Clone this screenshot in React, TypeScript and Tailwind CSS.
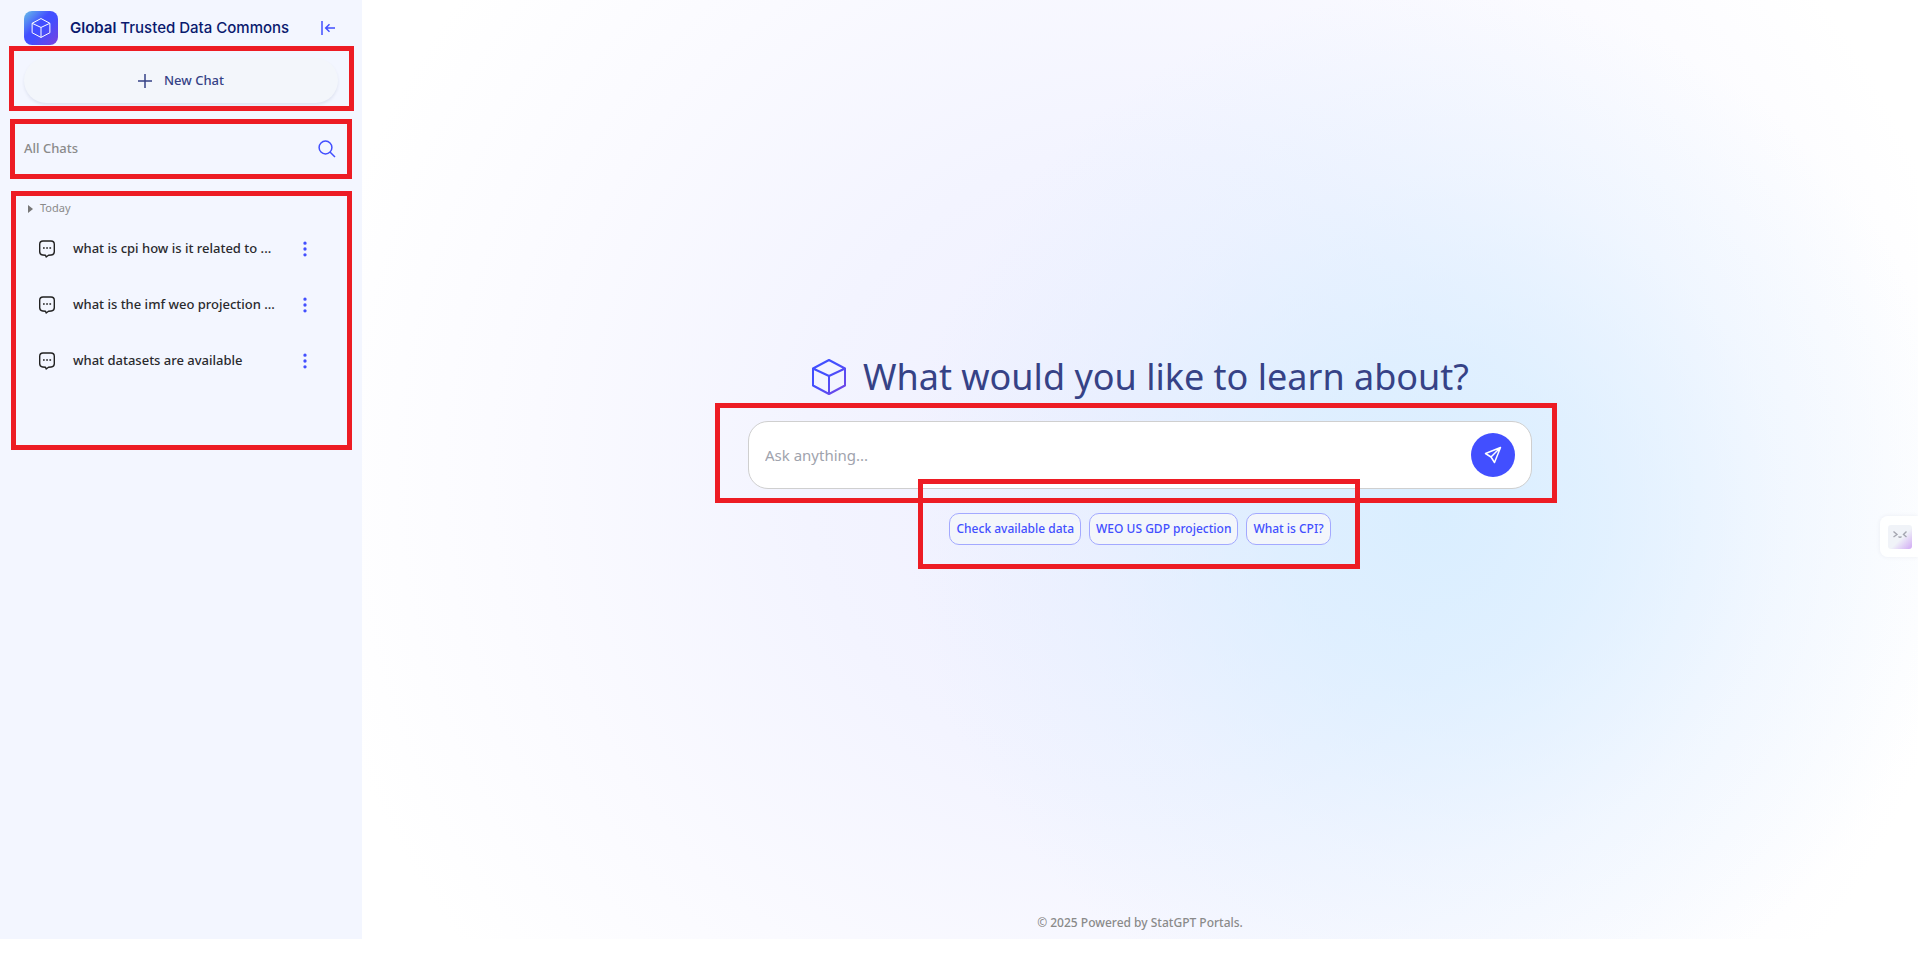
import React from "react";
import { MoreVertical } from "lucide-react";

const chats = [
  "what is cpi how is it related to ...",
  "what is the imf weo projection ...",
  "what datasets are available",
];

const suggestions = ["Check available data", "WEO US GDP projection", "What is CPI?"];

function Cube({ className, stroke, width }: { className: string; stroke: string; width: number }) {
  return (
    <svg viewBox="0 0 36 36" className={className} fill="none" stroke={stroke} strokeWidth={width} strokeLinejoin="round" aria-hidden="true">
      <defs>
        <linearGradient id="cube-stroke" x1="0" y1="0" x2="36" y2="36" gradientUnits="userSpaceOnUse">
          <stop offset="0.4" stopColor="#424fff" />
          <stop offset="1" stopColor="#7a45e0" />
        </linearGradient>
      </defs>
      <path d="M18 1 34 9.500V26.500L18 35 2 26.500V9.500ZM2 9.500 18 17 34 9.500M18 17V35" />
    </svg>
  );
}

function CollapseIcon() {
  return (
    <svg viewBox="0 0 16 16" className="size-4" fill="none" stroke="#424fff" strokeWidth="1.500" aria-hidden="true">
      <path d="M2 1v14M15 8H6M9.500 4.200 5.700 8l3.800 3.800" />
    </svg>
  );
}

function PlusIcon() {
  return (
    <svg viewBox="0 0 14 14" className="size-3.5" fill="none" stroke="#364286" strokeWidth="1.500" aria-hidden="true">
      <path d="M7 0v14M0 7h14" />
    </svg>
  );
}

function SearchIcon() {
  return (
    <svg viewBox="0 0 18 18" className="size-[18px]" fill="none" stroke="#424fff" strokeWidth="1.500" aria-hidden="true">
      <circle cx="7.500" cy="7.500" r="6.400" />
      <path d="m12 12 5 5" />
    </svg>
  );
}

function ChatIcon() {
  return (
    <svg viewBox="0 0 18 18" className="size-[18px] shrink-0" fill="none" stroke="#222" strokeWidth="1.400" strokeLinejoin="round" aria-hidden="true">
      <path d="M5 1h8q3.300 0 3.300 3.300v7.500q0 3-3 3.200L10.500 15.200 8.200 17 7.500 15.300 4.700 15Q1.700 14.800 1.700 11.800v-7.500Q1.700 1 5 1Z" />
      <path d="M5 8h1.700M8.200 8h1.700M11.400 8h1.700" />
    </svg>
  );
}

function SendIcon() {
  return (
    <svg viewBox="0 0 18 18" className="size-[18px]" fill="none" stroke="white" strokeWidth="1.500" strokeLinejoin="round" aria-hidden="true">
      <path d="M16.500 1.500 1.500 7.500 7 11 10.500 16.500ZM16.500 1.500 7 11" />
    </svg>
  );
}

function Marker({ className }: { className: string }) {
  return <div aria-hidden="true" className={`pointer-events-none absolute border-5 border-[#ed1c24] ${className}`} />;
}

export default function App() {
  return (
    <div className="flex h-screen bg-white pb-[15px] font-['Noto_Sans',sans-serif]">
      <aside className="flex w-[362px] shrink-0 flex-col bg-[#f3f6ff]">
        <header className="flex h-14 items-center pr-5 pl-6">
          <div className="flex size-[34px] items-center justify-center rounded-lg bg-[linear-gradient(135deg,#67bfe8_0%,#424fff_40%,#424fff_55%,#7a40dc_100%)]">
            <Cube className="size-5" stroke="white" width={1.8} />
          </div>
          <h1 className="ml-3 font-['Inter',sans-serif] text-[15px] font-medium text-[#0a1a6e]">
            <span className="font-semibold">Global</span> Trusted Data Commons
          </h1>
          <button type="button" aria-label="Collapse sidebar" className="ml-auto p-1.5">
            <CollapseIcon />
          </button>
        </header>

        <div className="relative px-6">
          <button type="button" className="mt-0.5 flex h-[45px] w-full items-center justify-center gap-3 rounded-full bg-[#f3f6fb] text-[13px] font-[550] text-[#364286] shadow-[0_2px_3px_rgba(60,70,120,0.1)]">
            <PlusIcon />
            New Chat
          </button>
          <Marker className="-top-2.5 right-2 left-[9px] h-[65px]" />
        </div>

        <div className="relative mt-4 flex h-[60px] items-center justify-between pr-6 pl-6">
          <h2 className="text-[13px] font-[550] text-[#8a8a8a]">All Chats</h2>
          <button type="button" aria-label="Search chats" className="p-0.5">
            <SearchIcon />
          </button>
          <Marker className="top-0 right-2.5 left-2.5 h-[60px]" />
        </div>

        <section className="relative mt-3 h-[259px] pt-[5px]">
          <button type="button" className="flex h-[25px] items-center gap-[7px] pl-7 text-[11px] text-[#8a8a8a]">
            <svg viewBox="0 0 5 8" className="h-2 w-[5px]" fill="#777" aria-hidden="true">
              <path d="M0 0 5 4 0 8Z" />
            </svg>
            Today
          </button>
          <ul>
            {chats.map((chat) => (
              <li key={chat} className="flex h-14 items-center pr-[47px] pl-[38px]">
                <ChatIcon />
                <a href="#" className="ml-[17px] flex-1 text-[13px] font-[550] whitespace-nowrap text-[#2a2a2e]">{chat}</a>
                <button type="button" aria-label="Chat options">
                  <MoreVertical className="size-5 fill-[#424fff] text-[#424fff]" strokeWidth={2} />
                </button>
              </li>
            ))}
          </ul>
          <Marker className="inset-y-0 right-2.5 left-[11px]" />
        </section>
      </aside>

      <main className="relative flex flex-1 flex-col items-center overflow-hidden bg-[radial-gradient(ellipse_34%_56%_at_69%_55%,rgba(213,237,255,0.85)_0%,rgba(213,237,255,0.65)_30%,rgba(213,237,255,0.25)_65%,rgba(213,237,255,0)_100%),radial-gradient(ellipse_54%_86%_at_50%_50%,#efefff_0%,#f3f4ff_40%,#fafaff_72%,#ffffff_100%)]">
        <div className="flex w-full flex-1 flex-col items-center pt-[350px]">
          <div className="flex h-[53px] items-center gap-4">
            <Cube className="size-9" stroke="url(#cube-stroke)" width={2} />
            <h2 className="text-[36px] leading-[53px] text-[#364286]">What would you like to learn about?</h2>
          </div>
          <div className="relative w-[848px] px-8 pt-[18px]">
            <form onSubmit={(e) => e.preventDefault()} className="flex h-[68px] items-center rounded-[20px] border border-[#cfcfcf] bg-white px-4">
              <input type="text" aria-label="Ask anything" placeholder="Ask anything..." className="flex-1 bg-transparent text-[15px] outline-none placeholder:text-[#a0a3ad]" />
              <button type="submit" aria-label="Send" className="flex size-11 items-center justify-center rounded-full bg-[#424fff]">
                <SendIcon />
              </button>
            </form>
            <Marker className="top-0 right-[7px] -left-px h-[100px]" />
          </div>
          <div className="relative flex w-[442px] justify-center gap-2 pt-6">
            {suggestions.map((s) => (
              <button key={s} type="button" className="h-8 rounded-[10px] border border-[#a3a9ff] bg-[#f3f6fb] px-1.5 text-xs font-medium whitespace-nowrap text-[#424fff]">{s}</button>
            ))}
            <Marker className="-top-2.5 right-px -left-px h-[90px]" />
          </div>
        </div>
        <footer className="pb-2 text-xs leading-4 font-medium text-[#8a8a8a]">© 2025 Powered by StatGPT Portals.</footer>
        <button type="button" aria-label="Open assistant" className="absolute top-[516px] right-0 flex h-[41px] w-[38px] items-center justify-center rounded-l-lg bg-white/90 pl-0.5 shadow-[0_0_4px_rgba(60,60,100,0.08)]">
          <svg viewBox="0 0 24 24" className="size-6" aria-hidden="true">
            <defs>
              <linearGradient id="face" x1="0" y1="0" x2="24" y2="24" gradientUnits="userSpaceOnUse">
                <stop offset="0.55" stopColor="#f0f3f8" />
                <stop offset="1" stopColor="#d0a8f4" />
              </linearGradient>
            </defs>
            <rect width="24" height="24" rx="3" fill="url(#face)" />
            <path d="m5.500 6.500 3.500 3-3.500 2.500M18.500 6.500l-3 3 3 2.500M10.500 11.500q1.500 1.500 3 0" fill="none" stroke="#a4a6b0" strokeWidth="1.400" />
          </svg>
        </button>
      </main>
    </div>
  );
}
